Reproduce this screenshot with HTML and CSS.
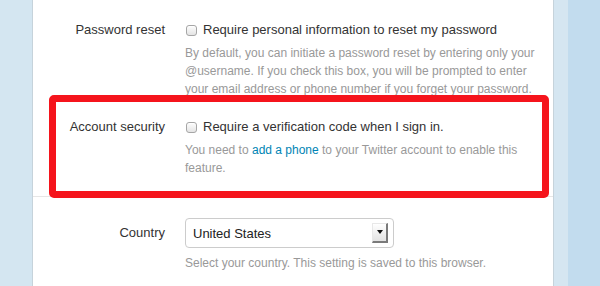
FILE: index.html
```html
<!DOCTYPE html>
<html>
<head>
<meta charset="utf-8">
<link rel="stylesheet" href="styles.css">
</head>
<body>
<div class="page">
  <div class="side-left"></div>
  <div class="card">
    <div class="section">
      <div class="row row-first">
        <div class="label">Password reset</div>
        <div class="control">
          <label class="check"><span class="box"></span>Require personal information to reset my password</label>
          <p class="help">By default, you can initiate a password reset by entering only your @username. If you check this box, you will be prompted to enter your email address or phone number if you forget your password.</p>
        </div>
      </div>
      <div class="row">
        <div class="label">Account security</div>
        <div class="control">
          <label class="check"><span class="box"></span>Require a verification code when I sign in.</label>
          <p class="help">You need to <a href="#">add a phone</a> to your Twitter account to enable this feature.</p>
        </div>
      </div>
    </div>
    <div class="section">
      <div class="row row-country">
        <div class="label label-country">Country</div>
        <div class="control">
          <div class="select"><span class="select-text">United States</span><span class="select-btn"><span class="arrow"></span></span></div>
          <p class="help help-country">Select your country. This setting is saved to this browser.</p>
        </div>
      </div>
    </div>
    <div class="highlight"></div>
  </div>
  <div class="side-gutter"></div>
  <div class="side-right"></div>
</div>
</body>
</html>
```

FILE: styles.css
```css
* { box-sizing: border-box; }
html, body { margin: 0; padding: 0; }
body {
  font-family: "Liberation Sans", Arial, Helvetica, sans-serif;
  color: #333;
  background: #c2dcee;
  height: 286px;
  overflow: hidden;
}
.page {
  display: flex;
  height: 286px;
}
.side-left {
  width: 32px;
  flex: none;
  background: #d4e6f1;
}
.card {
  position: relative;
  width: 522px;
  flex: none;
  background: #fff;
  border-left: 1px solid #c6d3db;
  border-right: 1px solid #c6d3db;
}
.side-gutter {
  width: 14px;
  flex: none;
  background: #d5e6f1;
}
.side-right {
  flex: 1;
  background: #c2dcee;
}
.section {
  padding-top: 1px;
  border-bottom: 1px solid #e6e6e6;
}
.row {
  display: grid;
  grid-template-columns: 132px 1fr;
  column-gap: 20px;
  padding: 0 0 19px;
}
.row-first {
  padding-top: 19px;
}
.label {
  text-align: right;
  font-size: 13px;
  line-height: 20px;
  color: #333;
}
.check {
  display: flex;
  align-items: center;
  font-size: 13px;
  line-height: 20px;
  color: #333;
}
.box {
  display: inline-block;
  width: 11px;
  height: 11px;
  margin: 0 6px 0 1px;
  border: 1px solid #a6a6a6;
  border-radius: 3px;
  background: linear-gradient(#fdfdfd, #e4e4e4);
  box-shadow: inset 0 1px 0 #fff;
}
.help {
  margin: 4px 0 0;
  font-size: 12px;
  line-height: 18px;
  color: #999;
  padding-right: 10px;
}
.help a {
  color: #0084b4;
  text-decoration: none;
}
.row-country {
  padding-top: 20px;
}
.label-country {
  line-height: 30px;
}
.select {
  position: relative;
  display: flex;
  align-items: center;
  justify-content: space-between;
  width: 209px;
  height: 30px;
  border: 1px solid #cccccc;
  border-radius: 4px;
  padding: 0 5px 0 7px;
  font-size: 13px;
  color: #222;
}
.select-btn {
  position: relative;
  width: 16px;
  height: 20px;
  background: linear-gradient(#ffffff, #e2e2e2);
  border-right: 2px solid #7a7a7a;
  border-bottom: 2px solid #7a7a7a;
  border-top: 1px solid #e8e8e8;
  border-left: 1px solid #e8e8e8;
}
.arrow {
  position: absolute;
  left: 4px;
  top: 6px;
  width: 0;
  height: 0;
  border-left: 3px solid transparent;
  border-right: 3px solid transparent;
  border-top: 4px solid #111;
}
.help-country {
  margin-top: 6px;
}
.highlight {
  position: absolute;
  left: 16px;
  top: 95px;
  width: 500px;
  height: 103px;
  border: 7px solid #f5141c;
  border-radius: 5px;
}
```
